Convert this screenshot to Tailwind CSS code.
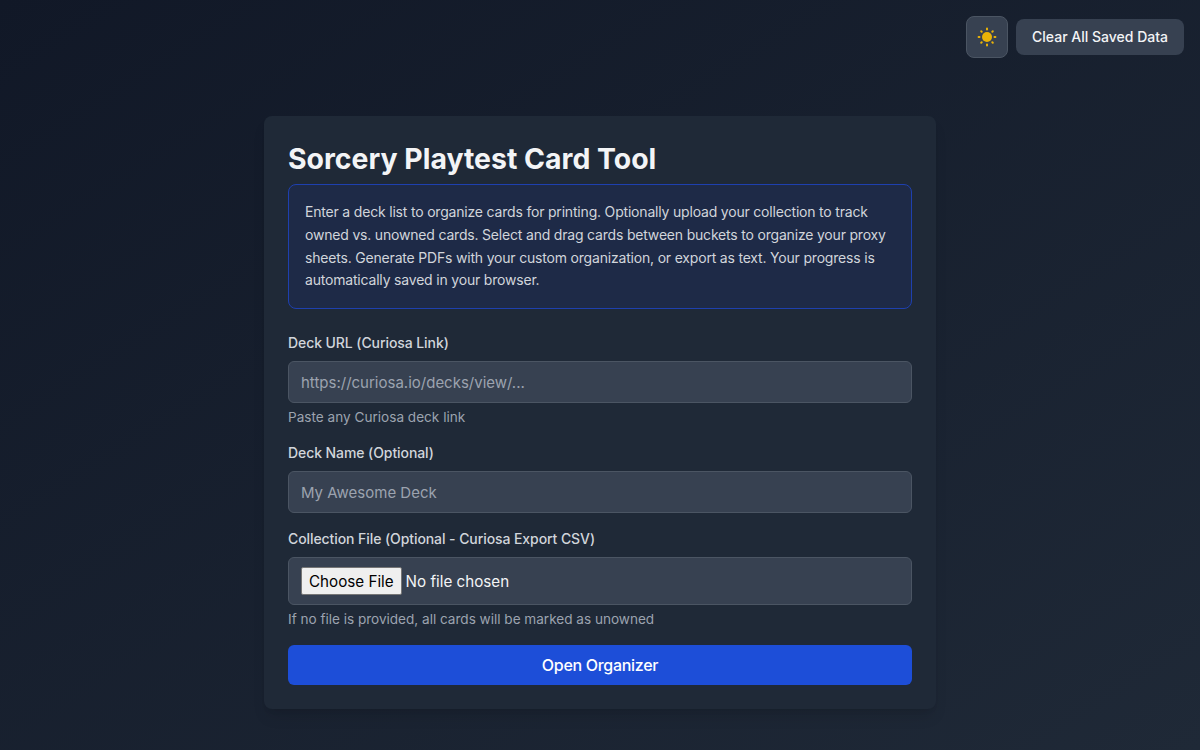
<!DOCTYPE html>
<html lang="en">

<head>
    <meta charset="UTF-8">
    <meta name="viewport" content="width=device-width, initial-scale=1.0">
    <title>Sorcery Playtest Card Tool</title>
    <script src="https://cdn.jsdelivr.net/npm/@tailwindcss/browser@4"></script>
</head>

<body class="min-h-screen bg-gradient-to-br from-[#111827] to-[#1f2937] text-[#f3f4f6] font-[Inter,sans-serif]">
    <div class="absolute top-4 right-4 flex items-center gap-2">
        <button aria-label="Toggle theme" class="w-[42px] h-[42px] flex items-center justify-center rounded-lg bg-[#374151] border border-[#4b5563]">
            <svg width="20" height="20" viewBox="0 0 20 20" fill="#eab308" stroke="#eab308" stroke-width="2" stroke-linecap="round">
                <circle cx="10" cy="10" r="5" stroke="none"/>
                <path d="M10 1.6v.9M10 17.5v.9M1.6 10h.9M17.5 10h.9M4.2 4.2l.5.5M15.3 15.3l.5.5M15.8 4.2l-.5.5M4.7 15.3l-.5.5"/>
            </svg>
        </button>
        <button class="px-4 py-2 h-9 rounded-lg bg-[#374151] text-sm font-medium text-[#f3f4f6]">Clear All Saved Data</button>
    </div>

    <div class="flex justify-center pt-[116px]">
        <div class="w-[672px] bg-[#1f2937] rounded-lg p-6 shadow-lg">
            <h1 class="text-[28.4px] leading-[38px] font-bold mb-[6px] text-[#f3f4f6]">Sorcery Playtest Card Tool</h1>

            <div class="mb-6 p-4 rounded-lg border border-[#1e40af] bg-[#1e2a47] text-sm leading-relaxed tracking-[-0.19px] text-[#d1d5db]">
                Enter a deck list to organize cards for printing. Optionally upload your collection to track owned vs. unowned cards. Select and drag cards between buckets to organize your proxy sheets. Generate PDFs with your custom organization, or export as text. Your progress is automatically saved in your browser.
            </div>

            <label class="block mb-2 text-sm font-medium tracking-[-0.08px] text-[#d1d5db]">Deck URL (Curiosa Link)</label>
            <input type="text" placeholder="https://curiosa.io/decks/view/..." class="w-full h-[42px] px-3 rounded-md border border-[#4b5563] bg-[#374151] text-[15px] text-[#f3f4f6] placeholder:text-[#9ca3af]">
            <p class="mt-1 mb-4 text-[13.6px] leading-5 text-[#9ca3af]">Paste any Curiosa deck link</p>

            <label class="block mb-2 text-sm font-medium tracking-[-0.08px] text-[#d1d5db]">Deck Name (Optional)</label>
            <input type="text" placeholder="My Awesome Deck" class="w-full h-[42px] mb-4 px-3 rounded-md border border-[#4b5563] bg-[#374151] text-[15px] text-[#f3f4f6] placeholder:text-[#9ca3af]">

            <label class="block mb-2 text-sm font-medium tracking-[-0.08px] text-[#d1d5db]">Collection File (Optional - Curiosa Export CSV)</label>
            <input type="file" class="block w-full h-12 px-3 py-[9px] rounded-md border border-[#4b5563] bg-[#374151] text-[15.2px] leading-7 text-[#f3f4f6] file:h-7 file:mr-1 file:px-[7px] file:rounded-[2px] file:border file:border-[#767676] file:bg-[#efefef] file:text-[15.2px] file:text-black">
            <p class="mt-1 mb-4 text-[13.6px] leading-5 tracking-[-0.02px] text-[#9ca3af]">If no file is provided, all cards will be marked as unowned</p>

            <button class="block w-full h-10 rounded-md bg-[#1d4ed8] text-base font-medium tracking-[-0.3px] text-white">Open Organizer</button>
        </div>
    </div>
</body>

</html>
